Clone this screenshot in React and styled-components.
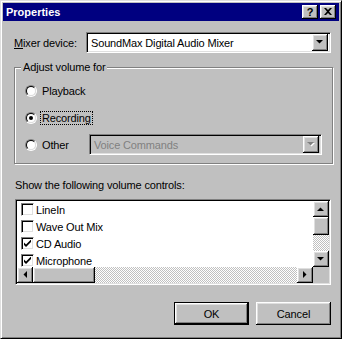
import React from 'react';
import styled, { createGlobalStyle, css } from 'styled-components';

const GlobalStyle = createGlobalStyle`
  html, body {
    margin: 0;
    padding: 0;
    background: #c0c0c0;
  }
  body {
    font-family: "Liberation Sans", Arial, sans-serif;
    font-size: 11px;
    letter-spacing: -0.15px;
    color: #000;
  }
`;

const raised = css`
  background: #c0c0c0;
  box-shadow: inset -1px -1px 0 #000, inset 1px 1px 0 #fff,
    inset -2px -2px 0 #808080, inset 2px 2px 0 #dfdfdf;
`;

const sunken = css`
  border: 1px solid;
  border-color: #808080 #fff #fff #808080;
  box-shadow: inset 1px 1px 0 #000, inset -1px -1px 0 #dfdfdf;
`;

const dither = css`
  background-color: #c0c0c0;
  background-image: repeating-conic-gradient(#fff 0 25%, #c0c0c0 0 50%);
  background-size: 2px 2px;
`;

const Window = styled.div`
  box-sizing: border-box;
  width: 342px;
  height: 339px;
  background: #c0c0c0;
  border: 1px solid;
  border-color: #dfdfdf #000 #000 #dfdfdf;
  box-shadow: inset 1px 1px 0 #fff, inset -1px -1px 0 #808080;
  padding: 2px;
  display: flex;
  flex-direction: column;
`;

const TitleBar = styled.div`
  height: 18px;
  background: #000080;
  display: flex;
  align-items: center;
  padding: 0 3px 0 3px;
`;

const Title = styled.div`
  color: #fff;
  font-weight: bold;
  font-size: 11px;
  letter-spacing: 0;
  flex: 1;
`;

const TitleButtons = styled.div`
  display: flex;
  gap: 2px;
`;

const TitleButton = styled.div`
  ${raised};
  width: 16px;
  height: 14px;
  display: flex;
  align-items: center;
  justify-content: center;
  font-weight: bold;
  font-size: 11px;
  line-height: 14px;
  padding-bottom: 1px;
  box-sizing: border-box;
`;

const Body = styled.div`
  display: flex;
  flex-direction: column;
  padding: 11px 8px 0 11px;
`;

const MixerRow = styled.div`
  display: flex;
  align-items: center;
  height: 21px;
`;

const Label = styled.span`
  width: 72px;
  white-space: nowrap;
`;

const Combo = styled.div`
  ${sunken};
  box-sizing: border-box;
  width: ${(p) => p.$w}px;
  height: 21px;
  display: flex;
  align-items: center;
  padding: 2px 2px 2px 4px;
  background: ${(p) => (p.$disabled ? '#c0c0c0' : '#fff')};
  color: ${(p) => (p.$disabled ? '#808080' : '#000')};
  white-space: nowrap;
`;

const ComboText = styled.span`
  flex: 1;
`;

const DropButton = styled.div`
  ${raised};
  width: 16px;
  height: 17px;
  display: flex;
  align-items: center;
  justify-content: center;
  flex-shrink: 0;
`;

const GroupBox = styled.div`
  box-sizing: border-box;
  margin-top: 14px;
  margin-right: -2px;
  height: 97px;
  border: 1px solid #808080;
  box-shadow: 1px 1px 0 #fff, inset 1px 1px 0 #fff;
  padding: 0 0 0 10px;
`;

const Legend = styled.div`
  width: fit-content;
  margin: -7px 0 0 -4px;
  padding: 0 2px;
  line-height: 13px;
  background: #c0c0c0;
`;

const RadioList = styled.div`
  display: flex;
  flex-direction: column;
  gap: 10px;
  padding-top: 8px;
`;

const RadioRow = styled.div`
  display: flex;
  align-items: center;
  height: 17px;
  gap: 3px;
`;

const RadioCircle = styled.span`
  box-sizing: border-box;
  width: 12px;
  height: 12px;
  border-radius: 50%;
  border: 1px solid;
  border-color: #808080 #fff #fff #808080;
  flex-shrink: 0;
  display: flex;
`;

const RadioInner = styled.span`
  box-sizing: border-box;
  flex: 1;
  border-radius: 50%;
  border: 1px solid;
  border-color: #000 #dfdfdf #dfdfdf #000;
  background: #fff;
  display: flex;
  align-items: center;
  justify-content: center;
`;

const RadioDot = styled.span`
  width: 4px;
  height: 4px;
  border-radius: 50%;
  background: #000;
`;

const RadioLabel = styled.span`
  padding: 0 1px;
  line-height: 12px;
  border: 1px dotted ${(p) => (p.$focus ? '#000' : 'transparent')};
  ${(p) => p.$w && `width: ${p.$w}px; box-sizing: border-box;`}
`;

const Caption = styled.div`
  margin-top: 15px;
  padding-left: 1px;
  line-height: 13px;
`;

const ListBox = styled.div`
  ${sunken};
  box-sizing: border-box;
  margin: 7px 0 0 1px;
  width: 316px;
  height: 86px;
  padding: 1px;
  background: #fff;
  display: grid;
  grid-template-columns: 1fr 16px;
  grid-template-rows: 1fr 16px;
`;

const Items = styled.div`
  overflow: hidden;
  padding-left: 4px;
`;

const Item = styled.div`
  height: 17px;
  display: flex;
  align-items: center;
  gap: 2px;
  white-space: nowrap;
`;

const CheckBox = styled.span`
  ${sunken};
  box-sizing: border-box;
  width: 13px;
  height: 13px;
  background: #fff;
  display: flex;
  align-items: center;
  justify-content: center;
  flex-shrink: 0;
`;

const VScroll = styled.div`
  display: flex;
  flex-direction: column;
`;

const HScroll = styled.div`
  display: flex;
`;

const ScrollBtn = styled.div`
  ${raised};
  width: 16px;
  height: 16px;
  display: flex;
  align-items: center;
  justify-content: center;
  flex-shrink: 0;
`;

const Thumb = styled.div`
  ${raised};
  width: ${(p) => p.$w}px;
  height: ${(p) => p.$h}px;
  flex-shrink: 0;
`;

const Track = styled.div`
  ${dither};
  flex: 1;
`;

const Corner = styled.div`
  background: #c0c0c0;
`;

const ButtonRow = styled.div`
  display: flex;
  justify-content: flex-end;
  gap: 7px;
  margin-top: 17px;
`;

const Button = styled.div`
  ${raised};
  box-sizing: border-box;
  width: 75px;
  height: 23px;
  display: flex;
  align-items: center;
  justify-content: center;
  ${(p) =>
    p.$default &&
    css`
      border: 1px solid #000;
    `}
`;

const U = styled.span`
  text-decoration: underline;
`;

const Arrow = ({ dir = 'down', disabled }) => {
  const pts = {
    down: '0,0 7,0 3.5,3.5',
    up: '0,4 7,4 3.5,0.5',
    left: '4,0 4,7 0.5,3.5',
    right: '0,0 0,7 3.5,3.5',
  }[dir];
  const vert = dir === 'up' || dir === 'down';
  return (
    <svg width={vert ? 8 : 5} height={vert ? 5 : 8} viewBox={vert ? '0 0 8 5' : '0 0 5 8'}>
      {disabled && <polygon points={pts} fill="#fff" transform="translate(1,1)" />}
      <polygon points={pts} fill={disabled ? '#808080' : '#000'} />
    </svg>
  );
};

const CloseGlyph = () => (
  <svg width="8" height="7" viewBox="0 0 8 7">
    <path d="M0 0h2l2 2 2-2h2L5 3.5 8 7H6L4 5 2 7H0l3-3.5z" fill="#000" />
  </svg>
);

const CheckGlyph = () => (
  <svg width="7" height="7" viewBox="0 0 7 7">
    <path d="M0 2l2 2 5-5v2.5L2 6.5 0 4.5z" fill="#000" transform="translate(0,0.5)" />
  </svg>
);

const Radio = ({ checked }) => (
  <RadioCircle>
    <RadioInner>{checked && <RadioDot />}</RadioInner>
  </RadioCircle>
);

const controls = [
  { name: 'LineIn', on: false },
  { name: 'Wave Out Mix', on: false },
  { name: 'CD Audio', on: true },
  { name: 'Microphone', on: true },
];

export default function App() {
  return (
    <>
      <GlobalStyle />
      <Window>
        <TitleBar>
          <Title>Properties</Title>
          <TitleButtons>
            <TitleButton>?</TitleButton>
            <TitleButton>
              <CloseGlyph />
            </TitleButton>
          </TitleButtons>
        </TitleBar>
        <Body>
          <MixerRow>
            <Label>
              <U>M</U>ixer device:
            </Label>
            <Combo $w={245}>
              <ComboText>SoundMax Digital Audio Mixer</ComboText>
              <DropButton>
                <Arrow />
              </DropButton>
            </Combo>
          </MixerRow>

          <GroupBox>
            <Legend>Adjust volume for</Legend>
            <RadioList>
              <RadioRow>
                <Radio />
                <RadioLabel>Playback</RadioLabel>
              </RadioRow>
              <RadioRow>
                <Radio checked />
                <RadioLabel $focus>Recording</RadioLabel>
              </RadioRow>
              <RadioRow>
                <Radio />
                <RadioLabel $w={46}>Other</RadioLabel>
                <Combo $w={233} $disabled>
                  <ComboText>Voice Commands</ComboText>
                  <DropButton>
                    <Arrow disabled />
                  </DropButton>
                </Combo>
              </RadioRow>
            </RadioList>
          </GroupBox>

          <Caption>Show the following volume controls:</Caption>
          <ListBox>
            <Items>
              {controls.map((c) => (
                <Item key={c.name}>
                  <CheckBox>{c.on && <CheckGlyph />}</CheckBox>
                  {c.name}
                </Item>
              ))}
            </Items>
            <VScroll>
              <ScrollBtn>
                <Arrow dir="up" />
              </ScrollBtn>
              <Thumb $w={16} $h={18} />
              <Track />
              <ScrollBtn>
                <Arrow dir="down" />
              </ScrollBtn>
            </VScroll>
            <HScroll>
              <ScrollBtn>
                <Arrow dir="left" />
              </ScrollBtn>
              <Thumb $w={62} $h={16} />
              <Track />
              <ScrollBtn>
                <Arrow dir="right" />
              </ScrollBtn>
            </HScroll>
            <Corner />
          </ListBox>

          <ButtonRow>
            <Button $default>OK</Button>
            <Button>Cancel</Button>
          </ButtonRow>
        </Body>
      </Window>
    </>
  );
}
